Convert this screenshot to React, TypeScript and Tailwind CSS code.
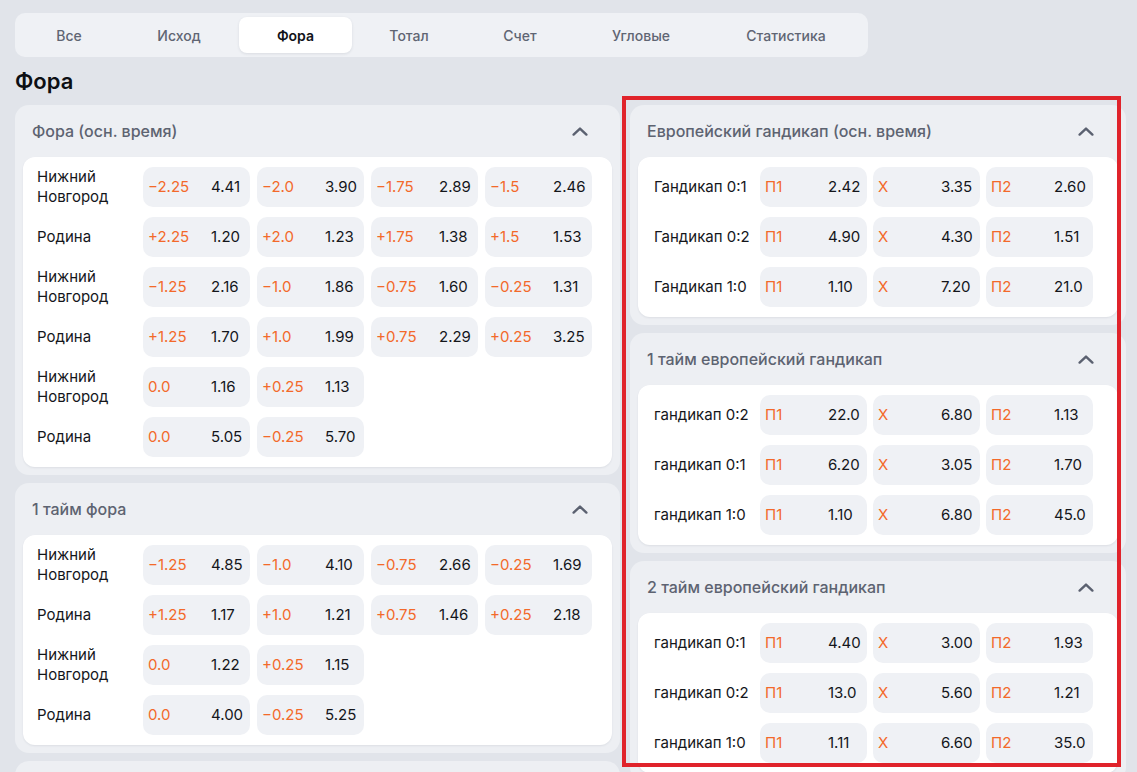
type Odd = [string, string];
type Row = { label: string; odds: Odd[] };

const tabs: { name: string; w: string }[] = [
  { name: "Все", w: "w-[100px]" },
  { name: "Исход", w: "w-[120px]" },
  { name: "Фора", w: "w-[113px]" },
  { name: "Тотал", w: "w-[114px]" },
  { name: "Счет", w: "w-[108px]" },
  { name: "Угловые", w: "w-[134px]" },
  { name: "Статистика", w: "w-[156px]" },
];

const foraMain: Row[] = [
  { label: "Нижний Новгород", odds: [["−2.25", "4.41"], ["−2.0", "3.90"], ["−1.75", "2.89"], ["−1.5", "2.46"]] },
  { label: "Родина", odds: [["+2.25", "1.20"], ["+2.0", "1.23"], ["+1.75", "1.38"], ["+1.5", "1.53"]] },
  { label: "Нижний Новгород", odds: [["−1.25", "2.16"], ["−1.0", "1.86"], ["−0.75", "1.60"], ["−0.25", "1.31"]] },
  { label: "Родина", odds: [["+1.25", "1.70"], ["+1.0", "1.99"], ["+0.75", "2.29"], ["+0.25", "3.25"]] },
  { label: "Нижний Новгород", odds: [["0.0", "1.16"], ["+0.25", "1.13"]] },
  { label: "Родина", odds: [["0.0", "5.05"], ["−0.25", "5.70"]] },
];

const foraFirst: Row[] = [
  { label: "Нижний Новгород", odds: [["−1.25", "4.85"], ["−1.0", "4.10"], ["−0.75", "2.66"], ["−0.25", "1.69"]] },
  { label: "Родина", odds: [["+1.25", "1.17"], ["+1.0", "1.21"], ["+0.75", "1.46"], ["+0.25", "2.18"]] },
  { label: "Нижний Новгород", odds: [["0.0", "1.22"], ["+0.25", "1.15"]] },
  { label: "Родина", odds: [["0.0", "4.00"], ["−0.25", "5.25"]] },
];

const foraSecond: Row[] = [
  { label: "Нижний Новгород", odds: [["−1.25", "5.10"], ["−1.0", "4.30"], ["−0.75", "2.75"], ["−0.25", "1.72"]] },
];

const euro = (l: string, a: string, b: string, c: string): Row => ({
  label: l,
  odds: [["П1", a], ["X", b], ["П2", c]],
});

const euroMain: Row[] = [
  euro("Гандикап 0:1", "2.42", "3.35", "2.60"),
  euro("Гандикап 0:2", "4.90", "4.30", "1.51"),
  euro("Гандикап 1:0", "1.10", "7.20", "21.0"),
];

const euroFirst: Row[] = [
  euro("гандикап 0:2", "22.0", "6.80", "1.13"),
  euro("гандикап 0:1", "6.20", "3.05", "1.70"),
  euro("гандикап 1:0", "1.10", "6.80", "45.0"),
];

const euroSecond: Row[] = [
  euro("гандикап 0:1", "4.40", "3.00", "1.93"),
  euro("гандикап 0:2", "13.0", "5.60", "1.21"),
  euro("гандикап 1:0", "1.11", "6.60", "35.0"),
];

function ChevronUp() {
  return (
    <svg width="16" height="9" viewBox="0 0 16 9" fill="none" className="shrink-0">
      <path
        d="M1.6 7.6 L8 1.6 L14.4 7.6"
        stroke="#5b6170"
        strokeWidth="2.4"
        strokeLinecap="round"
        strokeLinejoin="round"
      />
    </svg>
  );
}

/** Ячейка коэффициента: значение форы слева, кэф на фиксированном отступе. */
function OddCell({ odd }: { odd: Odd }) {
  return (
    <div className="flex h-10 w-[107px] shrink-0 items-center rounded-[10px] bg-[#eff1f5] pl-[5px] text-[15px]">
      <span className="w-[63px] text-[#f3692a]">{odd[0]}</span>
      <span className="text-[#14161b]">{odd[1]}</span>
    </div>
  );
}

function MarketCard({
  title,
  rows,
  euroStyle = false,
}: {
  title: string;
  rows: Row[];
  euroStyle?: boolean;
}) {
  return (
    <section className="rounded-[14px] bg-[#edeff3] px-2 pb-2">
      <div className="flex h-[52px] items-center justify-between pl-[9px] pr-6">
        <span className="text-[16px] font-medium text-[#5d6371]">{title}</span>
        <ChevronUp />
      </div>
      <div
        className={`flex flex-col gap-[10px] rounded-[12px] bg-white py-[10px] shadow-[0_1px_2px_rgba(30,40,60,0.08)] ${
          euroStyle ? "pl-4" : "pl-[14px]"
        }`}
      >
        {rows.map((row, i) => (
          <div key={i} className="flex items-center gap-[7px]">
            <span className="w-[99px] shrink-0 text-[15px] leading-5 text-[#14161b]">{row.label}</span>
            <div className={`flex ${euroStyle ? "gap-[6px]" : "gap-[7px]"}`}>
              {row.odds.map((odd, j) => (
                <OddCell key={j} odd={odd} />
              ))}
            </div>
          </div>
        ))}
      </div>
    </section>
  );
}

export default function App() {
  return (
    <div className="relative h-screen overflow-hidden bg-[#e1e4ea] px-[15px] pt-[13px] font-['Inter','Noto_Sans',sans-serif] antialiased">
      <nav className="inline-flex rounded-[10px] bg-[#eff1f5] p-1">
        {tabs.map((t) => (
          <button
            key={t.name}
            className={`h-9 rounded-[8px] text-[14px] ${t.w} ${
              t.name === "Фора"
                ? "bg-white font-semibold text-[#111318] shadow-[0_1px_3px_rgba(30,40,60,0.1)]"
                : "font-medium text-[#5f6573]"
            }`}
          >
            {t.name}
          </button>
        ))}
      </nav>

      <h1 className="mt-[10px] text-[22px] font-semibold leading-7 text-[#0d0f14]">Фора</h1>

      <div className="mt-[10px] grid grid-cols-[605px_496px] items-start gap-[10px]">
        <div className="flex flex-col gap-2">
          <MarketCard title="Фора (осн. время)" rows={foraMain} />
          <MarketCard title="1 тайм фора" rows={foraFirst} />
          <MarketCard title="2 тайм фора" rows={foraSecond} />
        </div>
        <div className="flex flex-col gap-2">
          <MarketCard title="Европейский гандикап (осн. время)" rows={euroMain} euroStyle />
          <MarketCard title="1 тайм европейский гандикап" rows={euroFirst} euroStyle />
          <MarketCard title="2 тайм европейский гандикап" rows={euroSecond} euroStyle />
        </div>
      </div>

      {/* выделение правой колонки */}
      <div className="pointer-events-none absolute left-[622px] top-[96px] h-[671px] w-[499px] border-4 border-[#e0232b]" />
    </div>
  );
}
